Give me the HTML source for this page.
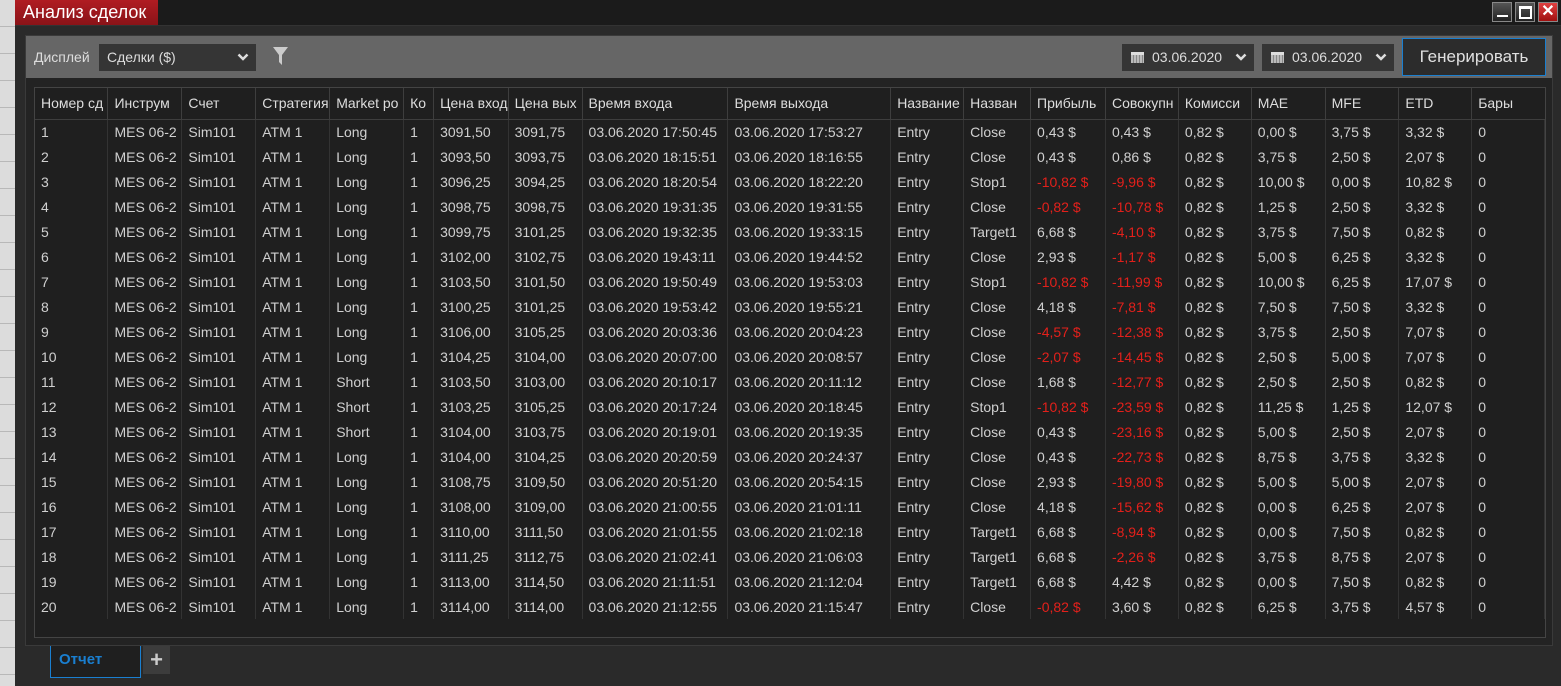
<!DOCTYPE html>
<html><head><meta charset="utf-8"><style>
*{margin:0;padding:0;box-sizing:border-box}
body{width:1561px;height:686px;overflow:hidden;background:#1c1c1c;font-family:"Liberation Sans",sans-serif;position:relative;color:#d4d4d4}
.left{position:absolute;left:0;top:0;width:15px;height:686px;background:#dcdcdc;background-image:repeating-linear-gradient(to bottom,transparent 0,transparent 26px,#b8b8b8 26px,#b8b8b8 27px)}
.win{position:absolute;left:15px;top:0;width:1546px;height:686px;background:#1b1b1b}
.title{position:absolute;left:0;top:0;width:143px;height:25px;background:linear-gradient(#b01c22,#8a1318);color:#fff;font-size:18px;line-height:24px;padding-left:8px}
.btns{position:absolute;right:3px;top:2px;display:flex;gap:3px}
.btns div{width:20px;height:20px;border:1px solid #888;background:linear-gradient(#555,#222);position:relative}
.body{position:absolute;left:0;top:25px;width:1546px;height:661px;background:#2a2a2a;border-top:1px solid #333}
.panel{position:absolute;left:10px;top:9px;width:1528px;height:611px;background:#232323;border:1px solid #3a3a3a}
.tb{position:absolute;left:0;top:0;width:100%;height:42px;background:#666}
.lbl{position:absolute;left:8px;top:13px;font-size:14px;color:#ddd}
.sel{position:absolute;top:8px;height:27px;background:#353535;color:#ddd;font-size:14px;line-height:27px;padding-left:8px}
.chev{position:absolute;right:7px;top:9px}
.gen{position:absolute;right:6px;top:2px;width:144px;height:38px;background:#2c2c2c;border:1px solid #1a7fd0;color:#e0e0e0;font-size:17px;line-height:36px;text-align:center}
.tbl{position:absolute;left:8px;top:51px;width:1512px;height:551px;border:1px solid #444;background:#1f1f1f}
table{border-collapse:collapse;table-layout:fixed;font-size:14px}
th{height:31px;font-weight:normal;text-align:left;padding-left:6px;border-right:1px solid #3e3e3e;border-bottom:1px solid #3e3e3e;white-space:nowrap;overflow:hidden;color:#ddd}
td{height:25px;padding-left:6px;border-right:1px solid #333;white-space:nowrap;overflow:hidden;color:#d0d0d0}
td.r{color:#e3201b}
.tabs{position:absolute;left:35px;top:620px;width:91px;height:32px;border:1px solid #1a7fd0;border-top:none;background:#1f1f1f;color:#1a7fd0;font-weight:bold;font-size:15px;line-height:28px;padding-left:8px}
.plus{position:absolute;left:128px;top:620px;width:27px;height:28px;background:#3c3c3c;color:#ccc;font-size:22px;text-align:center;line-height:28px;font-weight:bold}
.cal{position:absolute;left:9px;top:8px;width:13px;height:11px;background:repeating-linear-gradient(90deg,#bbb 0 2px,#888 2px 3px);border-top:3px solid #ddd}
</style></head><body>
<div class="left"></div>
<div class="win">
<div class="title">Анализ сделок</div>
<div class="btns"><div><span style="position:absolute;left:4px;bottom:4px;width:11px;height:2px;background:#fff"></span></div><div><span style="position:absolute;left:3px;top:3px;width:13px;height:13px;border:2px solid #fff;border-top-width:3px"></span></div><div style="background:linear-gradient(#e04040,#a01010);color:#fff;font-weight:bold;font-size:16px;line-height:18px;text-align:center">✕</div></div>
<div class="body">
<div class="panel">
<div class="tb">
<div class="lbl">Дисплей</div>
<div class="sel" style="left:73px;width:157px">Сделки ($)<svg class="chev" width="12" height="9" viewBox="0 0 12 9"><path d="M1.5 1.5L6 6L10.5 1.5" stroke="#ddd" stroke-width="2.5" fill="none"/></svg></div>
<svg style="position:absolute;left:247px;top:11px" width="15" height="18" viewBox="0 0 15 18"><path d="M0 0H15L9 8V18L6 15V8Z" fill="#ccc"/></svg>
<div class="sel" style="left:1096px;width:132px;padding-left:30px">03.06.2020<svg class="chev" width="12" height="9" viewBox="0 0 12 9"><path d="M1.5 1.5L6 6L10.5 1.5" stroke="#ddd" stroke-width="2.5" fill="none"/></svg><span class="cal"></span></div>
<div class="sel" style="left:1236px;width:132px;padding-left:30px">03.06.2020<svg class="chev" width="12" height="9" viewBox="0 0 12 9"><path d="M1.5 1.5L6 6L10.5 1.5" stroke="#ddd" stroke-width="2.5" fill="none"/></svg><span class="cal"></span></div>
<div class="gen">Генерировать</div>
</div>
<div class="tbl">
<table>
<colgroup><col style="width:73px"><col style="width:74px"><col style="width:74px"><col style="width:74px"><col style="width:74px"><col style="width:30px"><col style="width:74px"><col style="width:74px"><col style="width:146px"><col style="width:163px"><col style="width:73px"><col style="width:67px"><col style="width:75px"><col style="width:73px"><col style="width:73px"><col style="width:74px"><col style="width:74px"><col style="width:73px"><col style="width:73px"></colgroup>
<tr><th>Номер сд</th><th>Инструм</th><th>Счет</th><th>Стратегия</th><th>Market po</th><th>Ко</th><th>Цена вход</th><th>Цена вых</th><th>Время входа</th><th>Время выхода</th><th>Название</th><th>Назван</th><th>Прибыль</th><th>Совокупн</th><th>Комисси</th><th>MAE</th><th>MFE</th><th>ETD</th><th style="border-right:none">Бары</th></tr>
<tr><td>1</td><td>MES 06-2</td><td>Sim101</td><td>ATM 1</td><td>Long</td><td>1</td><td>3091,50</td><td>3091,75</td><td>03.06.2020 17:50:45</td><td>03.06.2020 17:53:27</td><td>Entry</td><td>Close</td><td>0,43 $</td><td>0,43 $</td><td>0,82 $</td><td>0,00 $</td><td>3,75 $</td><td>3,32 $</td><td>0</td></tr>
<tr><td>2</td><td>MES 06-2</td><td>Sim101</td><td>ATM 1</td><td>Long</td><td>1</td><td>3093,50</td><td>3093,75</td><td>03.06.2020 18:15:51</td><td>03.06.2020 18:16:55</td><td>Entry</td><td>Close</td><td>0,43 $</td><td>0,86 $</td><td>0,82 $</td><td>3,75 $</td><td>2,50 $</td><td>2,07 $</td><td>0</td></tr>
<tr><td>3</td><td>MES 06-2</td><td>Sim101</td><td>ATM 1</td><td>Long</td><td>1</td><td>3096,25</td><td>3094,25</td><td>03.06.2020 18:20:54</td><td>03.06.2020 18:22:20</td><td>Entry</td><td>Stop1</td><td class="r">-10,82 $</td><td class="r">-9,96 $</td><td>0,82 $</td><td>10,00 $</td><td>0,00 $</td><td>10,82 $</td><td>0</td></tr>
<tr><td>4</td><td>MES 06-2</td><td>Sim101</td><td>ATM 1</td><td>Long</td><td>1</td><td>3098,75</td><td>3098,75</td><td>03.06.2020 19:31:35</td><td>03.06.2020 19:31:55</td><td>Entry</td><td>Close</td><td class="r">-0,82 $</td><td class="r">-10,78 $</td><td>0,82 $</td><td>1,25 $</td><td>2,50 $</td><td>3,32 $</td><td>0</td></tr>
<tr><td>5</td><td>MES 06-2</td><td>Sim101</td><td>ATM 1</td><td>Long</td><td>1</td><td>3099,75</td><td>3101,25</td><td>03.06.2020 19:32:35</td><td>03.06.2020 19:33:15</td><td>Entry</td><td>Target1</td><td>6,68 $</td><td class="r">-4,10 $</td><td>0,82 $</td><td>3,75 $</td><td>7,50 $</td><td>0,82 $</td><td>0</td></tr>
<tr><td>6</td><td>MES 06-2</td><td>Sim101</td><td>ATM 1</td><td>Long</td><td>1</td><td>3102,00</td><td>3102,75</td><td>03.06.2020 19:43:11</td><td>03.06.2020 19:44:52</td><td>Entry</td><td>Close</td><td>2,93 $</td><td class="r">-1,17 $</td><td>0,82 $</td><td>5,00 $</td><td>6,25 $</td><td>3,32 $</td><td>0</td></tr>
<tr><td>7</td><td>MES 06-2</td><td>Sim101</td><td>ATM 1</td><td>Long</td><td>1</td><td>3103,50</td><td>3101,50</td><td>03.06.2020 19:50:49</td><td>03.06.2020 19:53:03</td><td>Entry</td><td>Stop1</td><td class="r">-10,82 $</td><td class="r">-11,99 $</td><td>0,82 $</td><td>10,00 $</td><td>6,25 $</td><td>17,07 $</td><td>0</td></tr>
<tr><td>8</td><td>MES 06-2</td><td>Sim101</td><td>ATM 1</td><td>Long</td><td>1</td><td>3100,25</td><td>3101,25</td><td>03.06.2020 19:53:42</td><td>03.06.2020 19:55:21</td><td>Entry</td><td>Close</td><td>4,18 $</td><td class="r">-7,81 $</td><td>0,82 $</td><td>7,50 $</td><td>7,50 $</td><td>3,32 $</td><td>0</td></tr>
<tr><td>9</td><td>MES 06-2</td><td>Sim101</td><td>ATM 1</td><td>Long</td><td>1</td><td>3106,00</td><td>3105,25</td><td>03.06.2020 20:03:36</td><td>03.06.2020 20:04:23</td><td>Entry</td><td>Close</td><td class="r">-4,57 $</td><td class="r">-12,38 $</td><td>0,82 $</td><td>3,75 $</td><td>2,50 $</td><td>7,07 $</td><td>0</td></tr>
<tr><td>10</td><td>MES 06-2</td><td>Sim101</td><td>ATM 1</td><td>Long</td><td>1</td><td>3104,25</td><td>3104,00</td><td>03.06.2020 20:07:00</td><td>03.06.2020 20:08:57</td><td>Entry</td><td>Close</td><td class="r">-2,07 $</td><td class="r">-14,45 $</td><td>0,82 $</td><td>2,50 $</td><td>5,00 $</td><td>7,07 $</td><td>0</td></tr>
<tr><td>11</td><td>MES 06-2</td><td>Sim101</td><td>ATM 1</td><td>Short</td><td>1</td><td>3103,50</td><td>3103,00</td><td>03.06.2020 20:10:17</td><td>03.06.2020 20:11:12</td><td>Entry</td><td>Close</td><td>1,68 $</td><td class="r">-12,77 $</td><td>0,82 $</td><td>2,50 $</td><td>2,50 $</td><td>0,82 $</td><td>0</td></tr>
<tr><td>12</td><td>MES 06-2</td><td>Sim101</td><td>ATM 1</td><td>Short</td><td>1</td><td>3103,25</td><td>3105,25</td><td>03.06.2020 20:17:24</td><td>03.06.2020 20:18:45</td><td>Entry</td><td>Stop1</td><td class="r">-10,82 $</td><td class="r">-23,59 $</td><td>0,82 $</td><td>11,25 $</td><td>1,25 $</td><td>12,07 $</td><td>0</td></tr>
<tr><td>13</td><td>MES 06-2</td><td>Sim101</td><td>ATM 1</td><td>Short</td><td>1</td><td>3104,00</td><td>3103,75</td><td>03.06.2020 20:19:01</td><td>03.06.2020 20:19:35</td><td>Entry</td><td>Close</td><td>0,43 $</td><td class="r">-23,16 $</td><td>0,82 $</td><td>5,00 $</td><td>2,50 $</td><td>2,07 $</td><td>0</td></tr>
<tr><td>14</td><td>MES 06-2</td><td>Sim101</td><td>ATM 1</td><td>Long</td><td>1</td><td>3104,00</td><td>3104,25</td><td>03.06.2020 20:20:59</td><td>03.06.2020 20:24:37</td><td>Entry</td><td>Close</td><td>0,43 $</td><td class="r">-22,73 $</td><td>0,82 $</td><td>8,75 $</td><td>3,75 $</td><td>3,32 $</td><td>0</td></tr>
<tr><td>15</td><td>MES 06-2</td><td>Sim101</td><td>ATM 1</td><td>Long</td><td>1</td><td>3108,75</td><td>3109,50</td><td>03.06.2020 20:51:20</td><td>03.06.2020 20:54:15</td><td>Entry</td><td>Close</td><td>2,93 $</td><td class="r">-19,80 $</td><td>0,82 $</td><td>5,00 $</td><td>5,00 $</td><td>2,07 $</td><td>0</td></tr>
<tr><td>16</td><td>MES 06-2</td><td>Sim101</td><td>ATM 1</td><td>Long</td><td>1</td><td>3108,00</td><td>3109,00</td><td>03.06.2020 21:00:55</td><td>03.06.2020 21:01:11</td><td>Entry</td><td>Close</td><td>4,18 $</td><td class="r">-15,62 $</td><td>0,82 $</td><td>0,00 $</td><td>6,25 $</td><td>2,07 $</td><td>0</td></tr>
<tr><td>17</td><td>MES 06-2</td><td>Sim101</td><td>ATM 1</td><td>Long</td><td>1</td><td>3110,00</td><td>3111,50</td><td>03.06.2020 21:01:55</td><td>03.06.2020 21:02:18</td><td>Entry</td><td>Target1</td><td>6,68 $</td><td class="r">-8,94 $</td><td>0,82 $</td><td>0,00 $</td><td>7,50 $</td><td>0,82 $</td><td>0</td></tr>
<tr><td>18</td><td>MES 06-2</td><td>Sim101</td><td>ATM 1</td><td>Long</td><td>1</td><td>3111,25</td><td>3112,75</td><td>03.06.2020 21:02:41</td><td>03.06.2020 21:06:03</td><td>Entry</td><td>Target1</td><td>6,68 $</td><td class="r">-2,26 $</td><td>0,82 $</td><td>3,75 $</td><td>8,75 $</td><td>2,07 $</td><td>0</td></tr>
<tr><td>19</td><td>MES 06-2</td><td>Sim101</td><td>ATM 1</td><td>Long</td><td>1</td><td>3113,00</td><td>3114,50</td><td>03.06.2020 21:11:51</td><td>03.06.2020 21:12:04</td><td>Entry</td><td>Target1</td><td>6,68 $</td><td>4,42 $</td><td>0,82 $</td><td>0,00 $</td><td>7,50 $</td><td>0,82 $</td><td>0</td></tr>
<tr><td>20</td><td>MES 06-2</td><td>Sim101</td><td>ATM 1</td><td>Long</td><td>1</td><td>3114,00</td><td>3114,00</td><td>03.06.2020 21:12:55</td><td>03.06.2020 21:15:47</td><td>Entry</td><td>Close</td><td class="r">-0,82 $</td><td>3,60 $</td><td>0,82 $</td><td>6,25 $</td><td>3,75 $</td><td>4,57 $</td><td>0</td></tr>
</table>
</div>
</div>
<div class="tabs">Отчет</div>
<div class="plus">+</div>
</div>
</div>
</body></html>
